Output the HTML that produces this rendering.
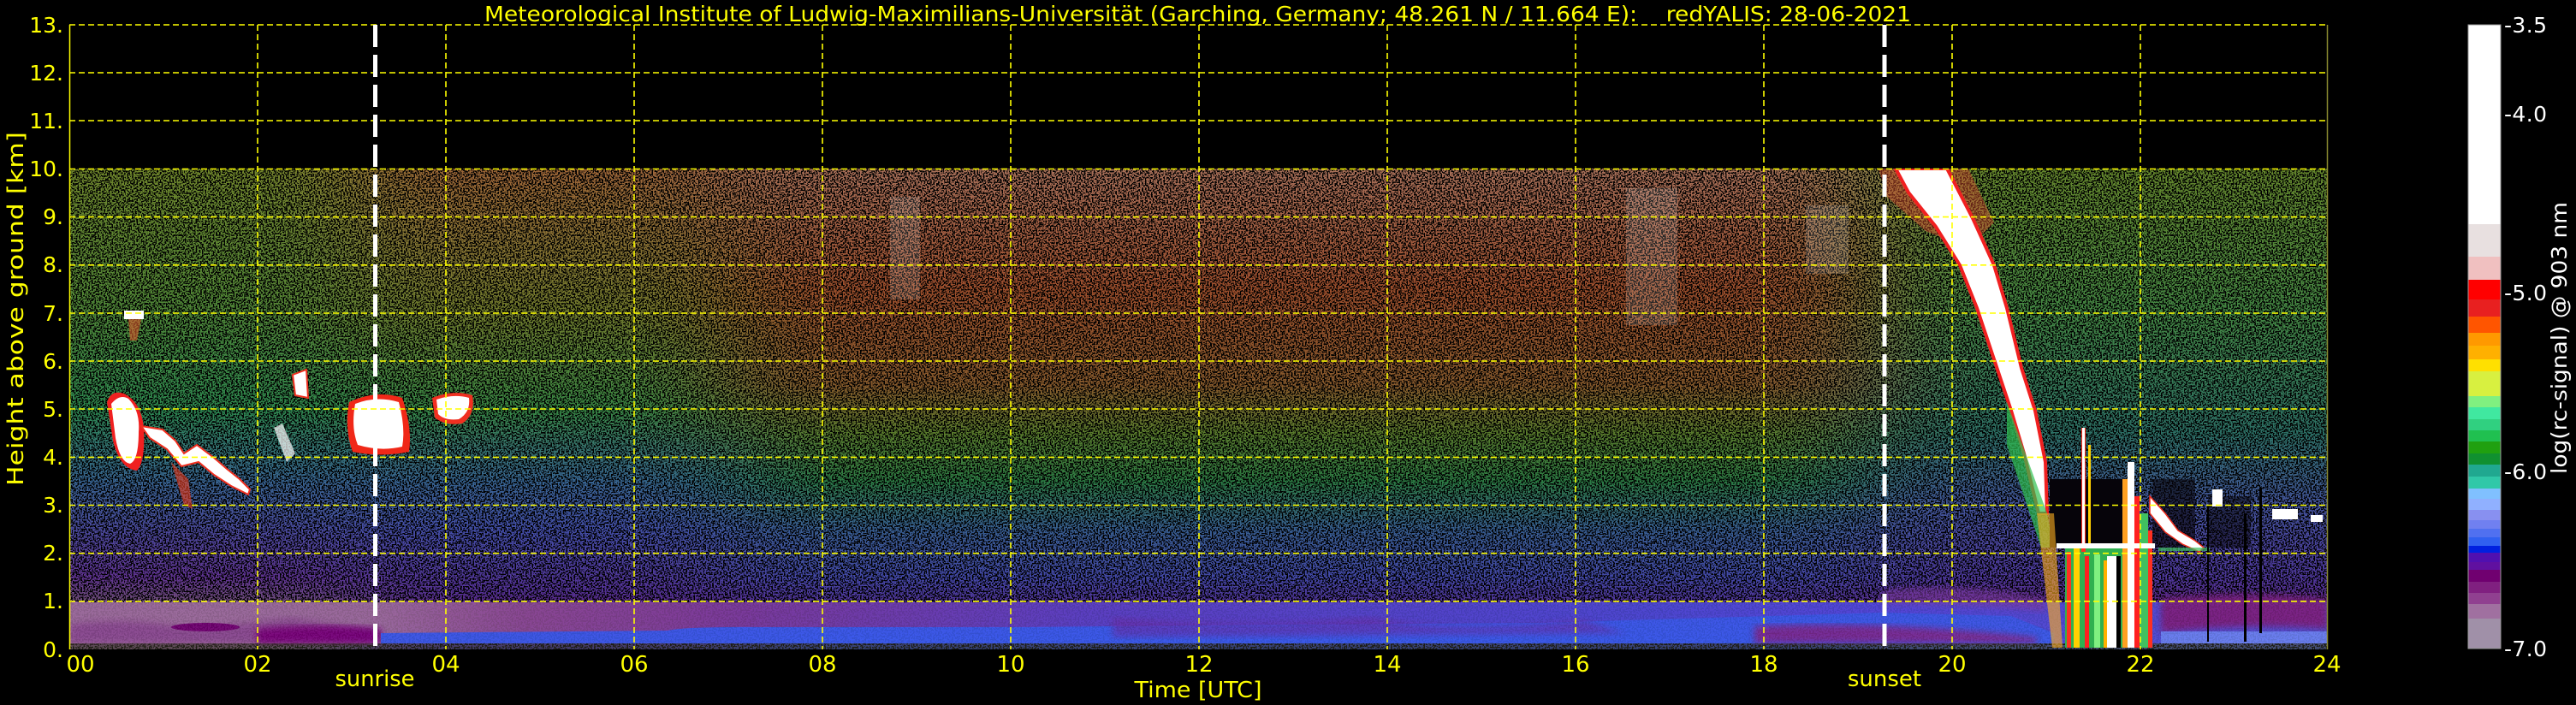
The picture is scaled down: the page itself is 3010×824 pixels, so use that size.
<!DOCTYPE html>
<html><head><meta charset="utf-8">
<style>
html,body{margin:0;padding:0;background:#000;width:3010px;height:824px;overflow:hidden}
svg{display:block}
text{font-family:"DejaVu Sans","Liberation Sans",sans-serif;fill:#ffff00}
</style></head><body>
<svg width="3010" height="824" viewBox="0 0 3010 824" xmlns="http://www.w3.org/2000/svg">
<defs>
<linearGradient id="gA" x1="0" y1="0" x2="0" y2="1">
<stop offset="0" stop-color="#a0c040"/><stop offset="0.3" stop-color="#70c050"/><stop offset="0.5" stop-color="#40c070"/><stop offset="0.65" stop-color="#5090d0"/><stop offset="0.75" stop-color="#6a6ae0"/><stop offset="0.85" stop-color="#8a4ad0"/><stop offset="0.9" stop-color="#a070b0"/><stop offset="1" stop-color="#a878b0"/>
</linearGradient>
<linearGradient id="gB" x1="0" y1="0" x2="0" y2="1">
<stop offset="0" stop-color="#e09050"/><stop offset="0.3" stop-color="#a0b040"/><stop offset="0.5" stop-color="#50c060"/><stop offset="0.65" stop-color="#5090d0"/><stop offset="0.75" stop-color="#6070f0"/><stop offset="0.88" stop-color="#7a48d8"/><stop offset="0.93" stop-color="#8a30b0"/><stop offset="1" stop-color="#6050e0"/>
</linearGradient>
<linearGradient id="gC" x1="0" y1="0" x2="0" y2="1">
<stop offset="0" stop-color="#f0a080"/><stop offset="0.25" stop-color="#e07040"/><stop offset="0.45" stop-color="#c08040"/><stop offset="0.55" stop-color="#80b040"/><stop offset="0.65" stop-color="#40b060"/><stop offset="0.75" stop-color="#5088d0"/><stop offset="0.85" stop-color="#6068f0"/><stop offset="0.92" stop-color="#7a40d0"/><stop offset="1" stop-color="#4060ff"/>
</linearGradient>
<linearGradient id="gD" x1="0" y1="0" x2="0" y2="1">
<stop offset="0" stop-color="#90c040"/><stop offset="0.3" stop-color="#60c060"/><stop offset="0.55" stop-color="#40a090"/><stop offset="0.7" stop-color="#6078e0"/><stop offset="0.85" stop-color="#7050e0"/><stop offset="0.93" stop-color="#8a30b0"/><stop offset="1" stop-color="#6080ff"/>
</linearGradient>
<linearGradient id="gBot" x1="0" y1="0" x2="1" y2="0">
<stop offset="0" stop-color="#9a6a9a"/><stop offset="0.14" stop-color="#9a6a9a"/><stop offset="0.2" stop-color="#8a4a90"/><stop offset="0.3" stop-color="#7a3a98"/><stop offset="0.45" stop-color="#5a40c0"/><stop offset="0.7" stop-color="#4a48d0"/><stop offset="0.8" stop-color="#5048d8"/><stop offset="1" stop-color="#5050d0"/>
</linearGradient>
<filter id="hb" x="-0.2" y="0" width="1.4" height="1"><feGaussianBlur stdDeviation="70 0"/></filter>
<filter id="bl"><feGaussianBlur stdDeviation="4"/></filter>
<filter id="spk" x="0" y="0" width="100%" height="100%">
<feTurbulence type="fractalNoise" baseFrequency="0.55" numOctaves="1" seed="4"/>
<feColorMatrix type="matrix" values="0 0 0 0 0  0 0 0 0 0  0 0 0 0 0  30 0 0 0 -15"/>
</filter>
<clipPath id="pc"><rect x="81" y="197" width="2639" height="562"/></clipPath>
</defs>

<g clip-path="url(#pc)">
<g filter="url(#hb)">
<rect x="-100" y="197" width="511" height="562" fill="url(#gA)"/>
<rect x="411" y="197" width="440" height="562" fill="url(#gB)"/>
<rect x="851" y="197" width="1330" height="562" fill="url(#gC)"/>
<rect x="2181" y="197" width="800" height="562" fill="url(#gD)"/>
</g>
<rect x="81" y="197" width="2639" height="562" filter="url(#spk)"/>
<rect x="81" y="197" width="2639" height="506" fill="#000" opacity="0.3"/>

<g opacity="0.9">
<rect x="81" y="704" width="2639" height="48" fill="url(#gBot)"/>
<path d="M81,730 Q150,720 220,735 Q300,728 340,722 L445,738 L445,752 L81,752 Z" fill="#8a4a90" filter="url(#bl)"/>
<ellipse cx="240" cy="733" rx="40" ry="5" fill="#700070"/>
<path d="M300,735 Q380,728 445,735 L445,752 L300,752 Z" fill="#780078" filter="url(#bl)"/>
<path d="M445,740 L780,737 Q800,732 900,733 L1200,733 L1500,730 L1800,728 L2000,722 L2200,716 L2350,720 L2400,740 L2400,752 L445,752 Z" fill="#3a5ae8"/>
<path d="M1300,722 Q1450,735 1600,722 Q1700,740 1850,725 L1900,740 L1300,745 Z" fill="#6a2aa0" opacity="0.6" filter="url(#bl)"/>
<path d="M2050,732 Q2200,725 2380,745 L2380,752 L2050,752 Z" fill="#7a2a90" filter="url(#bl)"/>
<path d="M2200,690 Q2300,680 2390,700 L2390,715 Q2300,705 2200,705 Z" fill="#7a3aa0" opacity="0.7" filter="url(#bl)"/>
<path d="M2525,700 Q2620,690 2720,700 L2720,735 Q2620,728 2525,740 Z" fill="#7a2080" filter="url(#bl)"/>
<rect x="2525" y="738" width="195" height="14" fill="#6a80f0"/>
</g>
<rect x="81" y="752" width="2639" height="7" fill="#303020" opacity="0.6"/>

<g>
<path d="M125,470 Q130,455 145,460 Q165,470 168,500 Q170,540 160,550 Q140,548 132,515 Z" fill="#f02020"/>
<path d="M130,472 Q140,460 150,466 Q164,480 162,505 Q162,538 152,542 Q140,540 135,512 Z" fill="#fff"/>
<path d="M165,498 L190,502 L205,515 L215,530 L230,520 L250,535 L265,548 L280,560 L292,572 L290,578 L270,568 L250,555 L232,540 L212,545 L195,525 L175,512 Z" fill="#fff" stroke="#f03020" stroke-width="2"/>
<path d="M200,540 L215,590 L225,595 L220,560 Z" fill="#f04020" opacity="0.6"/>
<path d="M145,363 L168,363 L168,373 L145,373 Z" fill="#fff"/>
<path d="M150,373 L165,373 L160,398 L152,398 Z" fill="#e06030" opacity="0.6"/>
<path d="M342,438 L358,432 L360,465 L345,462 Z" fill="#fff" stroke="#f03020" stroke-width="2"/>
<path d="M408,470 Q440,455 470,465 Q482,500 478,528 Q445,535 412,528 Q402,500 408,470 Z" fill="#f02818"/>
<path d="M415,472 Q440,462 466,470 Q474,500 470,522 Q445,528 418,520 Q410,500 415,472 Z" fill="#fff"/>
<path d="M505,465 Q530,455 552,462 Q556,485 540,495 Q520,498 508,488 Z" fill="#f03020"/>
<path d="M510,467 Q530,460 548,465 Q550,482 536,490 Q520,492 512,484 Z" fill="#fff"/>
<path d="M320,500 L330,495 L345,530 L335,540 Z" fill="#fff" opacity="0.7"/>
</g>

<g opacity="0.15">
<rect x="1040" y="230" width="35" height="120" fill="#fff"/>
<rect x="1900" y="220" width="60" height="160" fill="#fff"/>
<rect x="2110" y="240" width="50" height="80" fill="#fff"/>
</g>

<path d="M2195,197 L2300,197 L2330,260 L2300,290 L2250,270 L2205,230 Z" fill="#e05030" opacity="0.45"/>
<path d="M2215,197 L2275,197 L2305,255 L2330,310 L2345,360 L2362,430 L2378,480 L2390,540 L2392,600 L2382,600 L2365,530 L2350,480 L2330,420 L2310,360 L2290,310 L2262,265 L2230,225 Z" fill="#fff" stroke="#f02020" stroke-width="4" stroke-linejoin="round"/>
<path d="M2345,470 L2392,600 L2400,640 L2385,640 L2345,520 Z" fill="#30c050" opacity="0.7"/>

<rect x="2395" y="560" width="85" height="80" fill="#06040a"/>
<rect x="2515" y="560" width="50" height="80" fill="#06040a" opacity="0.6"/>
<rect x="2580" y="580" width="50" height="60" fill="#06040a" opacity="0.5"/>
<g>
<rect x="2413" y="640" width="100" height="117" fill="#30b050"/>
<rect x="2415" y="645" width="5" height="112" fill="#ff3020"/>
<rect x="2423" y="640" width="7" height="117" fill="#ffd000"/>
<rect x="2436" y="650" width="5" height="107" fill="#ff2020"/>
<rect x="2447" y="648" width="7" height="109" fill="#80f080"/>
<rect x="2458" y="655" width="5" height="102" fill="#ffb000"/>
<rect x="2462" y="650" width="12" height="107" fill="#fff"/>
<rect x="2473" y="650" width="5" height="107" fill="#000"/>
<rect x="2480" y="560" width="12" height="197" fill="#ffa020"/>
<rect x="2486" y="540" width="8" height="217" fill="#fff"/>
<rect x="2494" y="580" width="6" height="177" fill="#ff2020"/>
<rect x="2500" y="600" width="10" height="157" fill="#40c060"/>
<rect x="2510" y="620" width="5" height="137" fill="#ff3020"/>
<rect x="2432" y="500" width="5" height="145" fill="#ff3020"/>
<rect x="2433" y="500" width="3" height="140" fill="#fff"/>
<rect x="2440" y="520" width="3" height="120" fill="#ffd000"/>
<path d="M2380,600 L2400,600 L2410,757 L2398,757 Z" fill="#ffb020" opacity="0.6"/>
<rect x="2403" y="635" width="115" height="6" fill="#fff"/>
</g>
<path d="M2512,580 L2530,600 L2545,620 L2565,632 L2575,640 L2570,645 L2550,636 L2530,622 L2512,600 Z" fill="#fff" stroke="#f03020" stroke-width="1.5"/>
<rect x="2522" y="640" width="60" height="4" fill="#40c060" opacity="0.7"/>
<rect x="2585" y="572" width="12" height="20" fill="#fff"/>
<rect x="2655" y="595" width="30" height="12" fill="#fff"/>
<rect x="2700" y="602" width="14" height="8" fill="#fff"/>
<rect x="2579" y="590" width="2" height="160" fill="#000"/>
<rect x="2622" y="600" width="3" height="150" fill="#000"/>
<rect x="2640" y="570" width="3" height="170" fill="#000"/>
</g>

<g stroke="#ffff00" stroke-width="1.6" stroke-dasharray="7,4" fill="none">
<line x1="81" y1="29" x2="2720" y2="29"/>
<line x1="81" y1="85" x2="2720" y2="85"/>
<line x1="81" y1="141" x2="2720" y2="141"/>
<line x1="81" y1="197.5" x2="2720" y2="197.5"/>
<line x1="81" y1="253.6" x2="2720" y2="253.6"/>
<line x1="81" y1="309.8" x2="2720" y2="309.8"/>
<line x1="81" y1="366" x2="2720" y2="366"/>
<line x1="81" y1="422" x2="2720" y2="422"/>
<line x1="81" y1="478" x2="2720" y2="478"/>
<line x1="81" y1="534.4" x2="2720" y2="534.4"/>
<line x1="81" y1="590.5" x2="2720" y2="590.5"/>
<line x1="81" y1="646.7" x2="2720" y2="646.7"/>
<line x1="81" y1="702.8" x2="2720" y2="702.8"/>
<line x1="301" y1="29" x2="301" y2="759"/>
<line x1="521" y1="29" x2="521" y2="759"/>
<line x1="741" y1="29" x2="741" y2="759"/>
<line x1="961" y1="29" x2="961" y2="759"/>
<line x1="1181" y1="29" x2="1181" y2="759"/>
<line x1="1401" y1="29" x2="1401" y2="759"/>
<line x1="1621" y1="29" x2="1621" y2="759"/>
<line x1="1841" y1="29" x2="1841" y2="759"/>
<line x1="2061" y1="29" x2="2061" y2="759"/>
<line x1="2281" y1="29" x2="2281" y2="759"/>
<line x1="2501" y1="29" x2="2501" y2="759"/>
</g>
<line x1="81.5" y1="29" x2="81.5" y2="759" stroke="#ffff00" stroke-width="1.5"/>
<line x1="2719.5" y1="29" x2="2719.5" y2="759" stroke="#8a8a30" stroke-width="1.5"/>

<line x1="438.5" y1="29" x2="438.5" y2="759" stroke="#fff" stroke-width="5" stroke-dasharray="26,9"/>
<line x1="2202" y1="29" x2="2202" y2="759" stroke="#fff" stroke-width="5" stroke-dasharray="26,9"/>

<text x="566" y="25" font-size="25" textLength="1667" lengthAdjust="spacingAndGlyphs" xml:space="preserve">Meteorological Institute of Ludwig-Maximilians-Universität (Garching, Germany; 48.261 N / 11.664 E):    redYALIS: 28-06-2021</text>

<g font-size="25" text-anchor="end">
<text x="74" y="38">13.</text>
<text x="74" y="94">12.</text>
<text x="74" y="150">11.</text>
<text x="74" y="206">10.</text>
<text x="74" y="262">9.</text>
<text x="74" y="318">8.</text>
<text x="74" y="375">7.</text>
<text x="74" y="431">6.</text>
<text x="74" y="487">5.</text>
<text x="74" y="543">4.</text>
<text x="74" y="599">3.</text>
<text x="74" y="655">2.</text>
<text x="74" y="711">1.</text>
<text x="74" y="768">0.</text>
</g>
<text transform="translate(27,361) rotate(-90)" font-size="26" text-anchor="middle" textLength="414" lengthAdjust="spacingAndGlyphs">Height above ground [km]</text>

<g font-size="26" text-anchor="middle">
<text x="94" y="785">00</text>
<text x="301" y="785">02</text>
<text x="521" y="785">04</text>
<text x="741" y="785">06</text>
<text x="961" y="785">08</text>
<text x="1181" y="785">10</text>
<text x="1401" y="785">12</text>
<text x="1621" y="785">14</text>
<text x="1841" y="785">16</text>
<text x="2061" y="785">18</text>
<text x="2281" y="785">20</text>
<text x="2501" y="785">22</text>
<text x="2719" y="785">24</text>
<text x="438" y="802" textLength="93" lengthAdjust="spacingAndGlyphs">sunrise</text>
<text x="2202" y="802">sunset</text>
<text x="1400" y="815" textLength="149" lengthAdjust="spacingAndGlyphs">Time [UTC]</text>
</g>

<g>
<rect x="2884" y="29" width="38" height="233" fill="#ffffff"/>
<rect x="2884" y="262" width="38" height="38" fill="#e8e0e0"/>
<rect x="2884" y="300" width="38" height="27" fill="#f0c0c0"/>
<rect x="2884" y="327" width="38" height="23" fill="#ff0000"/>
<rect x="2884" y="350" width="38" height="20" fill="#e82020"/>
<rect x="2884" y="370" width="38" height="19" fill="#ff5500"/>
<rect x="2884" y="389" width="38" height="15" fill="#ff9900"/>
<rect x="2884" y="404" width="38" height="16" fill="#ffb000"/>
<rect x="2884" y="420" width="38" height="14" fill="#ffe000"/>
<rect x="2884" y="434" width="38" height="29" fill="#d8f040"/>
<rect x="2884" y="463" width="38" height="13" fill="#80f080"/>
<rect x="2884" y="476" width="38" height="14" fill="#40e8a0"/>
<rect x="2884" y="490" width="38" height="13" fill="#30d080"/>
<rect x="2884" y="503" width="38" height="13" fill="#20c050"/>
<rect x="2884" y="516" width="38" height="14" fill="#20a010"/>
<rect x="2884" y="530" width="38" height="13" fill="#109030"/>
<rect x="2884" y="543" width="38" height="14" fill="#20a890"/>
<rect x="2884" y="557" width="38" height="14" fill="#30c8a8"/>
<rect x="2884" y="571" width="38" height="12" fill="#80c0ff"/>
<rect x="2884" y="583" width="38" height="13" fill="#90b0ff"/>
<rect x="2884" y="596" width="38" height="12" fill="#8890f0"/>
<rect x="2884" y="608" width="38" height="10" fill="#7080f0"/>
<rect x="2884" y="618" width="38" height="10" fill="#5070f0"/>
<rect x="2884" y="628" width="38" height="10" fill="#3060f0"/>
<rect x="2884" y="638" width="38" height="8" fill="#0020e0"/>
<rect x="2884" y="646" width="38" height="11" fill="#5010b0"/>
<rect x="2884" y="657" width="38" height="9" fill="#6010a0"/>
<rect x="2884" y="666" width="38" height="14" fill="#700070"/>
<rect x="2884" y="680" width="38" height="13" fill="#802080"/>
<rect x="2884" y="693" width="38" height="13" fill="#904090"/>
<rect x="2884" y="706" width="38" height="17" fill="#a070a0"/>
<rect x="2884" y="723" width="38" height="35" fill="#a090a8"/>
<rect x="2884" y="29" width="38" height="729" fill="none" stroke="#999" stroke-width="1"/>
</g>
<g font-size="25">
<text x="2926" y="38" style="fill:#fff" textLength="50">-3.5</text>
<text x="2926" y="142" style="fill:#fff" textLength="50">-4.0</text>
<text x="2926" y="351" style="fill:#fff" textLength="50">-5.0</text>
<text x="2926" y="560" style="fill:#fff" textLength="50">-6.0</text>
<text x="2926" y="767" style="fill:#fff" textLength="50">-7.0</text>
</g>
<text transform="translate(2999,395) rotate(-90)" font-size="25" text-anchor="middle" style="fill:#fff" textLength="318" lengthAdjust="spacingAndGlyphs">log(rc-signal) @ 903 nm</text>
</svg>
</body></html>
